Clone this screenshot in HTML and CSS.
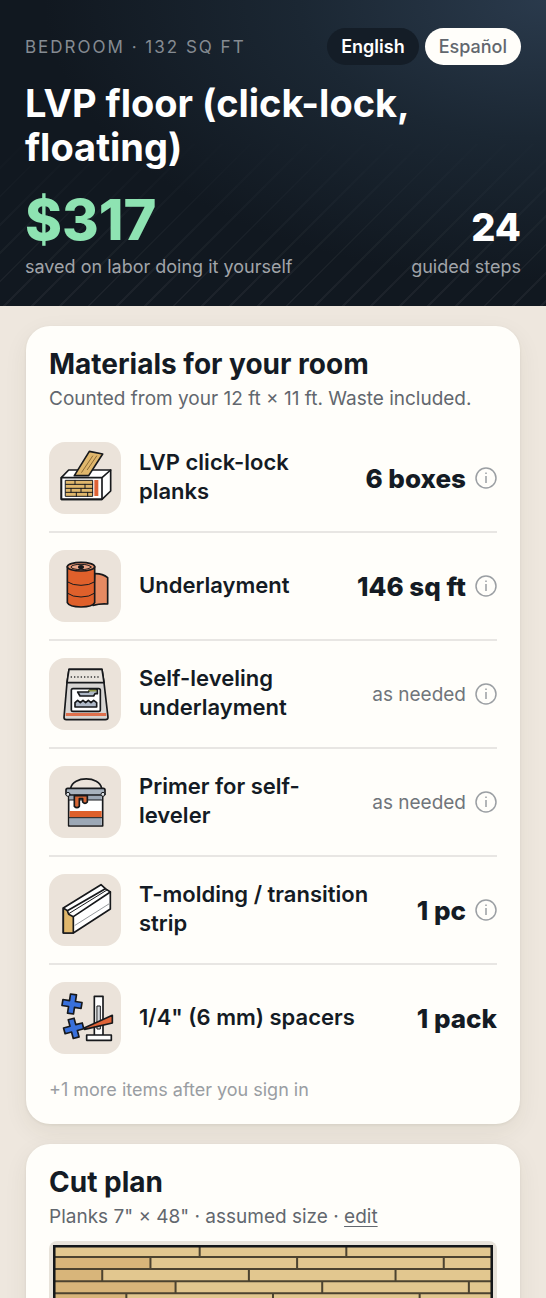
FILE: index.html
```html
<!DOCTYPE html>
<html lang="en">
<head>
  <meta charset="UTF-8">
  <meta name="viewport" content="width=device-width, initial-scale=1">
  <title>LVP floor (click-lock, floating)</title>
  <link rel="stylesheet" href="styles.css">
</head>
<body>
  <header class="hero">
    <div class="hero-top">
      <span class="eyebrow">Bedroom · 132 sq ft</span>
      <div class="langs">
        <button class="lang active" type="button">English</button>
        <button class="lang" type="button">Español</button>
      </div>
    </div>
    <h1>LVP floor (click-lock, floating)</h1>
    <div class="stats">
      <div>
        <div class="saved">$317</div>
        <div class="stat-label">saved on labor doing it yourself</div>
      </div>
      <div class="stat-right">
        <div class="steps">24</div>
        <div class="stat-label">guided steps</div>
      </div>
    </div>
  </header>

  <main>
    <section class="card">
      <h2>Materials for your room</h2>
      <p class="sub">Counted from your 12 ft × 11 ft. Waste included.</p>
      <ul class="items">
        <li class="item">
          <svg class="thumb" viewBox="0 0 216 216" aria-hidden="true">
            <path fill="#fff" d="M37 107 59 84H185V147L159 172H37Z"/>
            <path d="M37 107H159V172H37ZM159 107 185 84"/>
            <path fill="#e0b76c" d="M76 101 121 28 161 36 119 101Z"/>
            <path class="thin" stroke="#8d6b35" d="M98 91 131 42M115 83 143 42"/>
            <path class="thin" fill="#e0b76c" d="M50 115H131V163H50ZM50 127H131M50 139H131M50 151H131M78 115V127M108 127V139M66 139V151M96 139V151M82 151V163M116 151V163"/>
            <path fill="#df6337" stroke="none" d="M136 114H148V162H136Z"/>
          </svg>
          <span class="name">LVP click-lock planks</span>
          <span class="qty">6 boxes</span>
          <button class="info" type="button" aria-label="About LVP click-lock planks"><svg viewBox="0 0 44 44"><circle cx="22" cy="22" r="20"/><path d="M22 18V32M22 11V14"/></svg></button>
        </li>
        <li class="item">
          <svg class="thumb" viewBox="0 0 216 216" aria-hidden="true">
            <path fill="#e58a62" d="M137 71Q160 70 176 83V162Q155 160 132 166Z"/>
            <path fill="#df602b" d="M55 50V158Q61 171 96 171T137 158V50Z"/>
            <ellipse fill="#ee9670" cx="96" cy="50" rx="41" ry="13"/>
            <ellipse class="thin" fill="#e9a587" cx="96" cy="51" rx="30" ry="8"/>
            <ellipse fill="#17191c" stroke="none" cx="96" cy="51" rx="9" ry="6"/>
            <path class="thin" d="M56 96Q70 106 96 106T136 96M56 130Q70 141 96 141T136 130"/>
          </svg>
          <span class="name">Underlayment</span>
          <span class="qty">146 sq ft</span>
          <button class="info" type="button" aria-label="About underlayment"><svg viewBox="0 0 44 44"><circle cx="22" cy="22" r="20"/><path d="M22 18V32M22 11V14"/></svg></button>
        </li>
        <li class="item">
          <svg class="thumb" viewBox="0 0 216 216" aria-hidden="true">
            <path fill="#d7d5d3" d="M60 34H159L165 74 177 178Q177 185 169 185H52Q45 185 45 178L54 74Z"/>
            <path fill="#e8e3dd" d="M60 34H159L165 74H54Z"/>
            <path class="dots" d="M67 57H151"/>
            <path fill="#df704d" stroke="none" d="M51 165H171L172 174H50Z"/>
            <rect fill="#fff" x="67" y="92" width="87" height="68" rx="5"/>
            <path fill="#aeb8c7" d="M86 102H118L123 95H145V107H138L134 114H93Z"/>
            <path stroke="#8d9645" d="M121 98H140"/>
            <path fill="#aeb8c7" d="M78 147V134L86 127 94 134 102 127 110 134 118 127 126 134 134 127 143 134V147Z"/>
          </svg>
          <span class="name">Self-leveling underlayment</span>
          <span class="need">as needed</span>
          <button class="info" type="button" aria-label="About self-leveling underlayment"><svg viewBox="0 0 44 44"><circle cx="22" cy="22" r="20"/><path d="M22 18V32M22 11V14"/></svg></button>
        </li>
        <li class="item">
          <svg class="thumb" viewBox="0 0 216 216" aria-hidden="true">
            <path d="M65 67C72 29 151 29 158 67"/>
            <path fill="#fff" d="M59 84H161V180H59Z"/>
            <path fill="#9ca8b6" stroke="none" d="M62 88H158V102H62ZM62 155H158V177H62Z"/>
            <path fill="#df602b" stroke="none" d="M62 135H158V154H62Z"/>
            <path class="thin" d="M60 102H160M60 155H160"/>
            <rect fill="#a7b2be" x="51" y="67" width="117" height="20" rx="5"/>
            <path fill="#d76736" d="M76 89H115V108Q108 116 101 108V98H91V121Q84 129 76 121Z"/>
            <circle class="thin" fill="#dce1e5" cx="57" cy="85" r="6"/>
            <circle class="thin" fill="#dce1e5" cx="162" cy="85" r="6"/>
          </svg>
          <span class="name">Primer for self-leveler</span>
          <span class="need">as needed</span>
          <button class="info" type="button" aria-label="About primer"><svg viewBox="0 0 44 44"><circle cx="22" cy="22" r="20"/><path d="M22 18V32M22 11V14"/></svg></button>
        </li>
        <li class="item">
          <svg class="thumb" viewBox="0 0 216 216" aria-hidden="true">
            <path fill="#fff" d="M43 102 156 32 169 44 184 54V105L73 177H43Z"/>
            <path fill="#e0b76c" d="M43 102 55 110 59 121 73 128V177H43Z"/>
            <path d="M55 110 169 44M73 128 184 54"/>
            <path class="thin" d="M61 118 174 48"/>
            <path class="thin" stroke="#969a9d" d="M78 154 181 89"/>
          </svg>
          <span class="name">T-molding / transition strip</span>
          <span class="qty">1 pc</span>
          <button class="info" type="button" aria-label="About T-molding"><svg viewBox="0 0 44 44"><circle cx="22" cy="22" r="20"/><path d="M22 18V32M22 11V14"/></svg></button>
        </li>
        <li class="item">
          <svg class="thumb" viewBox="0 0 216 216" aria-hidden="true">
            <path fill="#3870dc" transform="translate(69 66) rotate(9)" d="M-9-29H9V-9H29V9H9V29H-9V9H-29V-9H-9Z"/>
            <path fill="#3870dc" transform="translate(74 139) rotate(-15)" d="M-9-29H9V-9H29V9H9V29H-9V9H-29V-9H-9Z"/>
            <path fill="#fff" d="M136 43H162V159H136ZM113 159H187V175H113Z"/>
            <path class="thin" fill="#d4d8dc" d="M145 72H154V141H145Z"/>
            <path fill="#df6337" d="M107 137 190 100V123L107 142Z"/>
          </svg>
          <span class="name">1/4" (6 mm) spacers</span>
          <span class="qty">1 pack</span>
        </li>
      </ul>
      <p class="more">+1 more items after you sign in</p>
    </section>

    <section class="card">
      <h2>Cut plan</h2>
      <p class="sub">Planks 7" × 48" · assumed size · <a href="#edit">edit</a></p>
      <div class="plan">
        <svg viewBox="0 0 438 84" role="img" aria-label="Plank layout">
          <path fill="#e2c78f" d="M0 0H438V84H0Z"/>
          <path fill="#d8b57a" d="M0 12H97V24H0ZM0 24H49V36H0ZM0 36H122V48H0ZM0 48H73V60H0Z"/>
          <path class="seam" d="M0 12H438M0 24H438M0 36H438M0 48H438M0 60H438M0 72H438M146 0V12M292 0V12M97 12V24M243 12V24M389 12V24M49 24V36M195 24V36M341 24V36M122 36V48M268 36V48M414 36V48M73 48V60M219 48V60M365 48V60"/>
          <path class="wall" d="M1 84V1H437V84"/>
        </svg>
      </div>
    </section>
  </main>
</body>
</html>
```
FILE: styles.css
```css
* { box-sizing: border-box; }
body { margin: 0; background: #eee7de; color: #141b24; font-family: Inter, "Noto Sans", sans-serif; }
h1, h2, p, ul { margin: 0; padding: 0; }
button { font: inherit; border: 0; cursor: pointer; }

.hero { position: relative; padding: 28px 25px 27px; color: #fff; background: radial-gradient(ellipse at 100% 0, #2a3a4c 0%, #1b2733 32%, #111820 65%); }
.hero::before { content: ""; position: absolute; inset: 0; background: repeating-linear-gradient(135deg, transparent 0 18px, rgba(255, 255, 255, .05) 18px 20px); -webkit-mask-image: linear-gradient(transparent 40%, #000); mask-image: linear-gradient(transparent 40%, #000); }
.hero > * { position: relative; }
.hero-top { display: flex; justify-content: space-between; align-items: center; }
.eyebrow { font-size: 17px; letter-spacing: 2px; text-transform: uppercase; color: #858b92; }
.langs { display: flex; gap: 6px; }
.lang { height: 37px; padding: 0 14px; border-radius: 19px; font-size: 18px; font-weight: 500; color: #62676e; background: #fffefa; }
.lang.active { font-weight: 600; color: #fff; background: #141d27; }
h1 { margin-top: 16px; font-size: 38px; line-height: 44px; font-weight: 700; }
.stats { display: flex; justify-content: space-between; align-items: flex-end; margin-top: 21px; }
.saved { font-size: 56px; line-height: 60px; font-weight: 800; color: #8ee3b2; }
.steps { font-size: 38px; line-height: 46px; font-weight: 800; }
.stat-label { margin-top: 5px; font-size: 18px; line-height: 24px; color: #a1a5aa; }
.stat-right { text-align: right; }

main { display: flex; flex-direction: column; gap: 20px; padding: 20px 26px; }
.card { padding: 22px 23px; border-radius: 24px; background: #fffefa; box-shadow: 0 1px 3px rgba(50, 50, 20, .08), 0 8px 24px rgba(50, 50, 20, .07); }
h2 { font-size: 28px; line-height: 32px; font-weight: 700; }
.sub { margin-top: 7px; font-size: 19px; line-height: 24px; color: #62676e; }
.sub a { color: inherit; text-decoration-thickness: 1px; text-underline-offset: 3px; }

.items { margin-top: 14px; list-style: none; }
.item { display: flex; align-items: center; padding: 17px 0; border-bottom: 2px solid #e8e6e3; }
.item:last-child { border-bottom: 0; }
.thumb { flex: none; width: 72px; height: 72px; margin-right: 18px; border-radius: 16px; background: #ebe3da; fill: none; stroke: #17191c; stroke-width: 5; stroke-linejoin: round; stroke-linecap: round; }
.thumb .thin { stroke-width: 3; }
.thumb .dots { stroke-dasharray: 0 10; }
.name { flex: 1; padding-bottom: 2px; font-size: 22px; line-height: 29px; font-weight: 600; }
.qty { margin-left: 12px; font-size: 26px; font-weight: 800; white-space: nowrap; }
.need { margin-left: 12px; font-size: 19px; color: #70757b; white-space: nowrap; }
.info { flex: none; width: 22px; height: 22px; margin-left: 9px; padding: 0; background: none; }
.info svg { display: block; fill: none; stroke: #9b9fa3; stroke-width: 3; }
.more { margin-top: 7px; font-size: 18px; line-height: 24px; color: #999da2; }

.plan { margin-top: 12px; padding: 4px; border-radius: 8px; background: #e8e3da; }
.plan svg { display: block; width: 100%; }
.seam { fill: none; stroke: #4c4330; stroke-width: 2; }
.wall { fill: none; stroke: #14171a; stroke-width: 3; }
```
